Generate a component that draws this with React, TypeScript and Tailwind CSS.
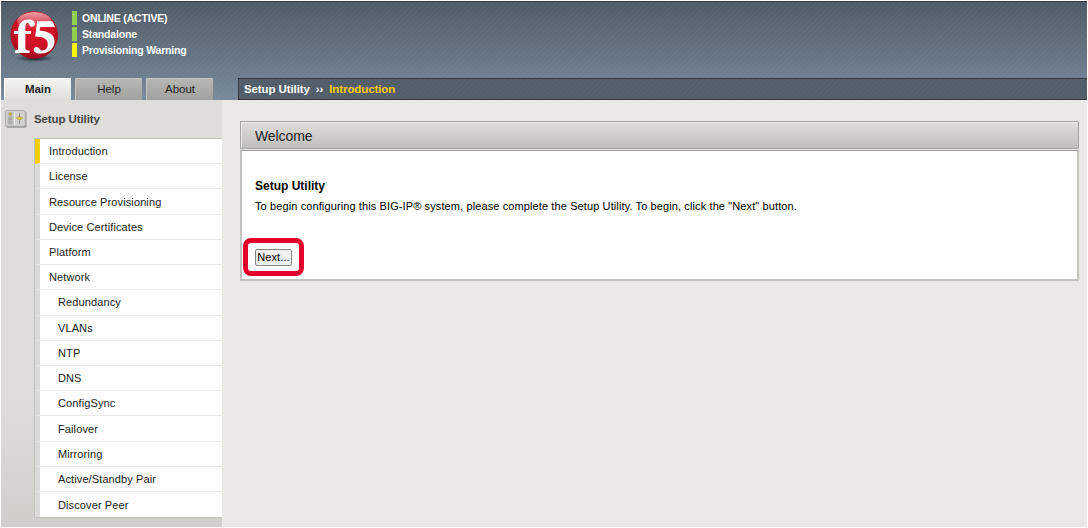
import React from "react";

const statuses = [
  { label: "ONLINE (ACTIVE)", color: "bg-[#92d050]" },
  { label: "Standalone", color: "bg-[#92d050]" },
  { label: "Provisioning Warning", color: "bg-[#fff600]" },
];

const menu = [
  { label: "Introduction", active: true },
  { label: "License" },
  { label: "Resource Provisioning" },
  { label: "Device Certificates" },
  { label: "Platform" },
  { label: "Network" },
  { label: "Redundancy", nested: true },
  { label: "VLANs", nested: true },
  { label: "NTP", nested: true },
  { label: "DNS", nested: true },
  { label: "ConfigSync", nested: true },
  { label: "Failover", nested: true },
  { label: "Mirroring", nested: true },
  { label: "Active/Standby Pair", nested: true },
  { label: "Discover Peer", nested: true },
];

function Logo() {
  return (
    <svg width="54" height="56" viewBox="0 0 54 56">
      <defs>
        <radialGradient id="ball" cx="0.5" cy="0.4" r="0.6">
          <stop offset="0" stopColor="#dd1528" />
          <stop offset="0.65" stopColor="#cc1226" />
          <stop offset="1" stopColor="#9c0a1c" />
        </radialGradient>
        <linearGradient id="gloss" x1="0" y1="0" x2="0" y2="1">
          <stop offset="0" stopColor="#fff" stopOpacity="0.6" />
          <stop offset="1" stopColor="#fff" stopOpacity="0" />
        </linearGradient>
        <radialGradient id="shade">
          <stop offset="0" stopColor="#111820" stopOpacity="0.9" />
          <stop offset="1" stopColor="#111820" stopOpacity="0" />
        </radialGradient>
      </defs>
      <ellipse cx="27" cy="49.500" rx="20" ry="3.500" fill="url(#shade)" />
      <circle cx="26.200" cy="26" r="23.800" fill="url(#ball)" />
      <ellipse cx="26.200" cy="12" rx="17" ry="9" fill="url(#gloss)" />
      <g transform="translate(2.200 3.500) scale(0.93)" fill="#fff">
        <path d="M4 20h4.500C8.500 12 13 7.500 19.500 7.500c4.500 0 7 1.700 7 4.700 0 2-1.300 3.200-3.200 3.200-3 0-2.300-4.400-4.700-4.400-1.900 0-2.300 2.200-2.300 5.500V20h6v3.200h-6v14.300c0 2.500 1 3 4.500 3.300V43.500H5v-2.700c2.800-.3 3.500-.8 3.500-3.300V23.200H4z" />
        <path d="M29 9.500H45.500l2.700 6H32.300l-.7 4C41 19.800 47.700 23.500 47.700 31c0 8-7 13.200-14.700 13.200-4.700 0-7.700-1.500-7.700-4.200 0-1.800 1.300-3 3-3 2.900 0 3.600 3.800 6.400 3.800 3.300 0 5.700-2.800 5.700-6.600 0-5.700-4.500-8.200-13.600-8.300z" />
      </g>
    </svg>
  );
}

function SetupIcon() {
  return (
    <svg width="22" height="18" viewBox="0 0 22 18">
      <rect x="1.200" y="1.200" width="20.300" height="16.500" rx="1.500" fill="#969694" />
      <rect x="0.500" y="0.500" width="19.800" height="15.800" rx="1.500" fill="#d2d2ce" stroke="#a9a9a6" />
      <rect x="2.500" y="2" width="6" height="13" fill="#c0c0bc" />
      <circle cx="5.200" cy="4" r="1.500" fill="#c2a43a" />
      <circle cx="5.200" cy="8.400" r="1.300" fill="none" stroke="#8a8a88" strokeWidth="0.700" />
      <circle cx="5.200" cy="12.400" r="1.300" fill="none" stroke="#8a8a88" strokeWidth="0.700" />
      <path d="M9.500 2v13" stroke="#ebebe8" />
      <path d="M14.500 3v11" stroke="#8a8a86" />
      <path d="M11.800 7h5.400v1.500L14.500 10 11.800 8.500z" fill="#e3cb30" stroke="#9c8c30" strokeWidth="0.500" />
    </svg>
  );
}

export default function App() {
  return (
    <div className="h-[528px] w-[1088px] overflow-hidden bg-white p-px font-['Liberation_Sans',Arial,sans-serif] text-[11px] leading-4 text-[#222]">
      <div className="flex h-[526px] w-[1086px] flex-col bg-[#e9e8e4]">
        <header className="flex h-[99px] flex-col justify-between border-t border-[#363c46] bg-[repeating-linear-gradient(135deg,rgba(255,255,255,0.025)_0px,rgba(255,255,255,0.025)_1.500px,transparent_1.500px,transparent_4px),linear-gradient(to_bottom,#505b67,#788a9c)]">
          <div className="flex h-[65px] pt-[7px] pl-[7px]">
            <Logo />
            <ul className="mt-[2px] ml-[10px] text-white">
              {statuses.map((s) => (
                <li key={s.label} className="flex h-4 items-start text-[10.5px] font-bold tracking-[-0.18px]">
                  <span className={`h-[14px] w-[5px] ${s.color}`} />
                  <span className="ml-[5px] leading-[14px] whitespace-nowrap">{s.label}</span>
                </li>
              ))}
            </ul>
          </div>
          <div className="flex h-[22px] shrink-0">
            <nav className="ml-[3px] flex w-[234px] gap-1 text-center text-[11.5px] leading-[20px]">
              <span className="w-[67px] border-t border-l border-white bg-linear-to-b from-[#f4f4f2] to-[#deddd9] font-bold">Main</span>
              <span className="w-[67px] border-t border-l border-[#c4c4c1] bg-linear-to-b from-[#b6b6b3] to-[#a0a09c]">Help</span>
              <span className="w-[67px] border-t border-l border-[#c4c4c1] bg-linear-to-b from-[#b6b6b3] to-[#a0a09c]">About</span>
            </nav>
            <div className="flex flex-1 border-y border-l border-[#34383e] bg-[repeating-linear-gradient(135deg,rgba(255,255,255,0.02)_0px,rgba(255,255,255,0.02)_1.500px,transparent_1.500px,transparent_4px),linear-gradient(#525e6a,#525e6a)] pl-[5px] text-[11.5px] leading-[21px] font-bold tracking-[-0.1px] text-white">
              <span>Setup Utility</span>
              <span className="ml-[6px]">››</span>
              <span className="ml-[6px] text-[#ffcc00]">Introduction</span>
            </div>
          </div>
        </header>

        <div className="flex h-[427px]">
          <aside className="flex w-[221px] flex-col bg-linear-to-b from-[#deddd9] via-[#deddd9] via-70% to-[#cfcec9]">
            <div className="flex h-[38px] items-center pl-1">
              <SetupIcon />
              <span className="ml-[7px] text-[11.5px] font-bold tracking-[-0.1px] text-[#444]">Setup Utility</span>
            </div>
            <ul className="ml-[33px] border-y border-l border-[#c2c1bd] bg-white tracking-[0.11px]">
              {menu.map((m) => (
                <li
                  key={m.label}
                  className={`flex h-[25.23px] items-center border-b border-l-5 border-b-[#e9e9e7] last:border-b-0 ${m.active ? "border-l-[#ffcc00]" : "border-l-[#dadad8]"} ${m.nested ? "pl-[18px]" : "pl-[9px]"}`}
                >
                  {m.label}
                </li>
              ))}
            </ul>
          </aside>

          <main className="flex-1 pt-[21px] pl-[18px]">
            <h1 className="h-[28px] w-[839px] border border-[#a3a3a0] bg-linear-to-b from-[#dfdedb] to-[#bfbeba] pl-[14px] text-[14px] leading-[28px] tracking-[-0.1px] shadow-[inset_1px_1px_0_#ededeb]">
              Welcome
            </h1>
            <section className="mt-px h-[131px] w-[839px] border-2 border-t border-[#c2c2bf] border-t-[#9d9d9a] bg-white pl-[13px] text-black">
              <h2 className="pt-[27px] text-[12px] font-bold">Setup Utility</h2>
              <p className="mt-1 tracking-[0.11px] whitespace-nowrap">
                To begin configuring this BIG-IP® system, please complete the Setup Utility. To begin, click the "Next" button.
              </p>
              <div className="mt-[24px] -ml-3 flex h-[38px] w-[61px] items-center justify-center rounded-[8px] border-5 border-[#e4002b]">
                <button className="h-[17px] w-[37px] rounded-[2px] border border-[#858585] bg-[#efefef] leading-[15px] tracking-[0.1px] whitespace-nowrap">Next...</button>
              </div>
            </section>
          </main>
        </div>
      </div>
    </div>
  );
}
